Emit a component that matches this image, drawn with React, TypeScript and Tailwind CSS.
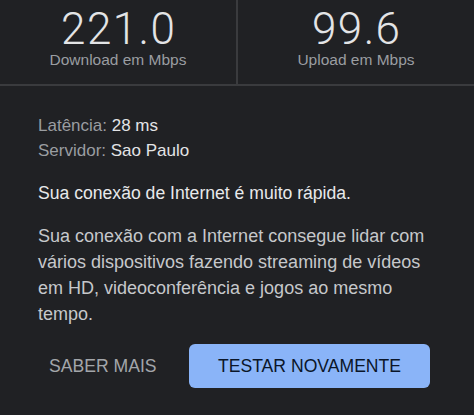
export default function App() {
  return (
    <div className="w-[474px] h-[415px] overflow-hidden bg-[#202124] font-['Liberation_Sans',Arial,sans-serif]">
      <div className="flex h-[86px] border-b-2 border-[#3a3b3e]">
        <div className="flex-1 flex flex-col items-center border-r-2 border-[#3a3b3e] pt-[11px]">
          <div className="font-['Roboto',sans-serif] font-light text-[44px] leading-[36px] tracking-[1.4px] pl-[1.4px] text-[#e3e4e6]">221.0</div>
          <div className="mt-[4px] text-[15.5px] leading-[17px] text-[#9a9da1]">Download em Mbps</div>
        </div>
        <div className="flex-1 flex flex-col items-center pt-[11px]">
          <div className="font-['Roboto',sans-serif] font-light text-[44px] leading-[36px] tracking-[1.4px] pl-[1.4px] text-[#e3e4e6]">99.6</div>
          <div className="mt-[4px] text-[15.5px] leading-[17px] text-[#9a9da1]">Upload em Mbps</div>
        </div>
      </div>

      <div className="pl-[38px] pr-[30px] pt-[27px]">
        <div className="text-[17px] leading-[25px]">
          <p>
            <span className="text-[#9a9da1]">Latência: </span>
            <span className="text-[#e3e4e6]">28 ms</span>
          </p>
          <p>
            <span className="text-[#9a9da1]">Servidor: </span>
            <span className="text-[#e3e4e6]">Sao Paulo</span>
          </p>
        </div>

        <p className="mt-[18px] text-[17.6px] leading-[25px] text-[#e8e9eb]">
          Sua conexão de Internet é muito rápida.
        </p>

        <p className="mt-[17px] w-[400px] text-[18px] leading-[26px] text-[#c6c8cb]">
          Sua conexão com a Internet consegue lidar com vários dispositivos fazendo streaming de vídeos em HD, videoconferência e jogos ao mesmo tempo.
        </p>

        <div className="mt-[17px] flex items-center">
          <button className="w-[151px] pl-[11px] text-left text-[17.6px] text-[#a3a6aa] uppercase">Saber mais</button>
          <button className="w-[241px] h-[44px] rounded-[6px] bg-[#8ab4f8] text-[17.6px] text-[#0b1629] uppercase">
            Testar novamente
          </button>
        </div>
      </div>
    </div>
  );
}
